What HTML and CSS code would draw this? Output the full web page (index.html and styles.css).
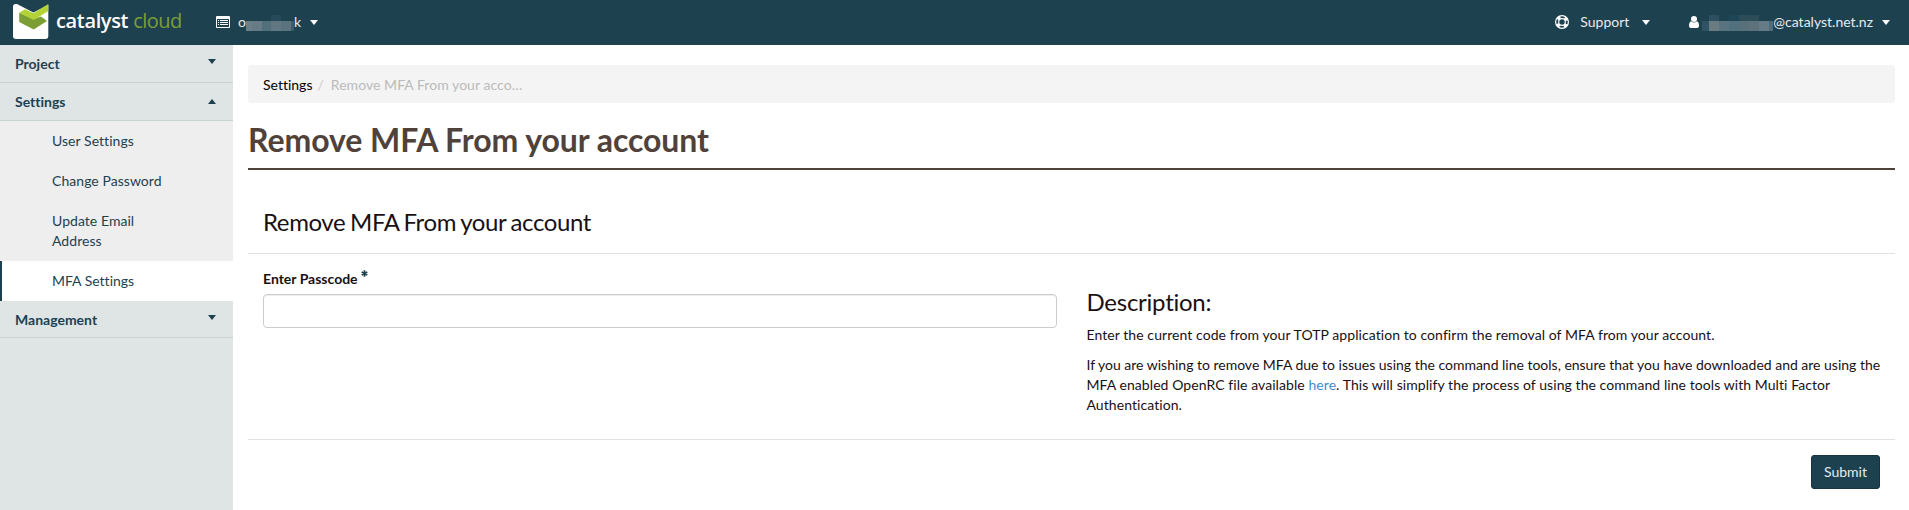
FILE: index.html
```
<!DOCTYPE html>
<html lang="en">
<head>
<meta charset="utf-8">
<title>Remove MFA From your account</title>
<link rel="stylesheet" href="styles.css">
</head>
<body>
<header class="topbar">
  <a class="brand">
    <svg class="brand-mark" width="36" height="36" viewBox="0 0 36 36">
      <path fill="#fff" d="M2.500 0H4L20.300 8.500L35.300 1V32a3 3 0 0 1-3 3H3a3 3 0 0 1-3-3V2.500A2.500 2.500 0 0 1 2.500 0z"/>
      <path fill="#7b9f35" d="M6.200 8.700L20.700 15L28 12.500L34 17L20.700 25.500L6.200 18z"/>
      <path fill="#b2d235" d="M6.200 8.700L12 5.300L20.300 9.300L35.300 0V7L20.700 16z"/>
    </svg>
    <span class="brand-name">catalyst</span><span class="brand-sub">cloud</span>
  </a>
  <div class="menu menu-project">
    <svg class="icon-list" width="14" height="12" viewBox="0 0 14 12">
      <path fill="#fff" fill-rule="evenodd" d="M1 0h12A1 1 0 0 1 14 1v10A1 1 0 0 1 13 12H1A1 1 0 0 1 0 11V1A1 1 0 0 1 1 0zM1 3V11h12V3zM2 4h1v1H2zM4 4h8v1H4zM2 6h1v1H2zM4 6h8v1H4zM2 8h1v1H2zM4 8h8v1H4z"/>
    </svg>
    <span class="menu-text">o</span><span class="mask mask-project"></span><span class="menu-text">k</span>
    <span class="caret"></span>
  </div>
  <div class="menu menu-support">
    <svg class="icon-ring" width="14" height="14" viewBox="0 0 14 14">
      <circle cx="7" cy="7" r="6.400" fill="none" stroke="#fff" stroke-width="1.200"/>
      <circle cx="7" cy="7" r="3.300" fill="none" stroke="#fff" stroke-width="1.200"/>
      <circle cx="7" cy="7" r="5" fill="none" stroke="#fff" stroke-width="3" stroke-dasharray="3.400 4.454" stroke-dashoffset="-2.227"/>
    </svg>
    <span class="menu-text">Support</span>
    <span class="caret"></span>
  </div>
  <div class="menu menu-user">
    <svg class="icon-user" width="10" height="12" viewBox="0 0 10 12">
      <circle cx="5" cy="3" r="3" fill="#fff"/>
      <path fill="#fff" d="M2.200 5.200Q5 8 7.800 5.200Q10 5.600 10 10Q10 12 8 12H2Q0 12 0 10Q0 5.600 2.200 5.200z"/>
    </svg>
    <span class="mask mask-user"></span><span class="menu-text">@catalyst.net.nz</span>
    <span class="caret"></span>
  </div>
</header>
<div class="page">
  <nav class="sidebar">
    <div class="group">Project<span class="caret"></span></div>
    <div class="group">Settings<span class="caret caret-up"></span></div>
    <ul class="links">
      <li class="link">User Settings</li>
      <li class="link">Change Password</li>
      <li class="link">Update Email Address</li>
      <li class="link link-active">MFA Settings</li>
    </ul>
    <div class="group group-last">Management<span class="caret"></span></div>
  </nav>
  <main class="main">
    <div class="breadcrumb"><span class="crumb">Settings</span><span class="slash">/</span><span class="crumb-current">Remove MFA From your acco…</span></div>
    <h1 class="title">Remove MFA From your account</h1>
    <h3 class="form-title">Remove MFA From your account</h3>
    <div class="form-body">
      <div class="field">
        <label class="label" for="passcode">Enter Passcode<svg class="required" width="7" height="7" viewBox="0 0 7 7"><path stroke="#1d4050" stroke-width="1.700" d="M3.500 .3V6.700M.7 1.900L6.300 5.100M6.300 1.900L.7 5.100"/></svg></label>
        <input class="input" id="passcode" type="text">
      </div>
      <div class="help">
        <h3 class="help-title">Description:</h3>
        <p class="text">Enter the current code from your TOTP application to confirm the removal of MFA from your account.</p>
        <p class="text"><span class="tight">If you are wishing to remove MFA due to issues using the command line tools, ensure that you have downloaded and are using the</span><br>MFA enabled OpenRC file available <a class="here">here</a>. This will simplify the process of using the command line tools with Multi Factor<br>Authentication.</p>
      </div>
    </div>
    <div class="form-footer"><button class="submit">Submit</button></div>
  </main>
</div>
</body>
</html>
```
FILE: styles.css
```
* { box-sizing: border-box; }
body { margin: 0; height: 510px; overflow: hidden; background: #fff; color: #1a1014; font: 14px/20px Lato, sans-serif; font-variant-ligatures: none; }
h1, h3, p, ul { margin: 0; padding: 0; font-weight: 400; }

.topbar { display: flex; align-items: center; height: 45px; padding-right: 19px; background: #1e4150; color: #e6eaec; }
.brand { display: flex; align-items: center; width: 216px; padding-left: 13px; height: 45px; font: 20px/24px "Open Sans", sans-serif; }
.brand-mark { margin: -1px 7px 0 0; }
.brand-name { margin-top: -3px; color: #fff; font-weight: 600; letter-spacing: -.35px; }
.brand-sub { margin: -3px 0 0 5px; color: #7b9f35; font-weight: 400; letter-spacing: -.5px; }
.menu { display: flex; align-items: center; margin-top: -2px; }
.menu-support { margin-left: auto; }
.menu-user { margin-left: 39px; }
.icon-list { margin-right: 8px; }
.icon-ring { margin: 1px 11px 0 0; }
.icon-user { margin-top: 1px; }
.caret { width: 0; height: 0; border: 4px solid transparent; border-top: 5px solid currentColor; border-bottom: 0; }
.menu .caret { color: #fff; margin-left: 13px; margin-top: 1px; }
.menu-project .caret { margin-left: 9px; }
.menu-user .caret { margin-left: 9px; }
.mask { height: 16px; margin-top: 2px; background-repeat: no-repeat; }
.mask-project {
  width: 48px;
  background-image: linear-gradient(#264a59, #264a59), linear-gradient(90deg, #6a7f88 0 6px, #667b85 6px 16px, #526f7c 16px 25px, #617782 25px 35px, #5b737e 35px 45px, #3d5c69 45px);
  background-size: 10px 6px, 100% 10px;
  background-position: 25px 0, 0 6px;
}
.mask-user {
  width: 71px;
  margin-left: 3px;
  background-image: linear-gradient(90deg, transparent 7px, #2c5060 7px 17px, transparent 17px 27px, #1e4558 27px 37px, #2c4d58 37px 57px, transparent 57px), linear-gradient(90deg, #2f5365 0 7px, #6b7b82 7px 17px, #597380 17px 27px, #52717e 27px 37px, #57707a 37px 47px, #5d727a 47px 57px, #657b86 57px 67px, #506c79 67px);
  background-size: 100% 6px, 100% 10px;
  background-position: 0 0, 0 6px;
}

.page { display: flex; height: 465px; }
.sidebar { flex: none; width: 233px; background: #dfe5e4; color: #1e4150; }
.group { display: flex; justify-content: space-between; height: 38px; padding: 9px 17px 0 15px; border-bottom: 1px solid #c8d2d5; font-weight: 700; }
.group-last { height: 37px; }
.group .caret { margin-top: 5px; }
.group .caret-up { margin-top: 7px; border: 4px solid transparent; border-bottom: 5px solid currentColor; border-top: 0; }
.links { list-style: none; background: #eee; }
.link { padding: 10px 70px 10px 52px; letter-spacing: .05px; }
.link-active { padding-left: 50px; border-left: 2px solid #1e4150; background: #fff; letter-spacing: 0; }

.main { flex: 1; min-width: 0; padding: 20px 14px 0 15px; }
.breadcrumb { height: 38px; padding: 10px 15px 8px; border-radius: 4px; background: #f4f4f4; }
.crumb { color: #000; }
.slash { padding: 0 7px 0 5px; color: #ccc; }
.crumb-current { color: #bbb; letter-spacing: .05px; }
.title { height: 67px; padding-top: 19px; border-bottom: 2px solid #50423a; color: #50423a; font: 700 32px/36px Lato, sans-serif; letter-spacing: -.07px; }
.form-title { height: 84px; padding: 38px 15px 0; border-bottom: 1px solid #e2e2e2; font-size: 24px; line-height: 27px; letter-spacing: -.4px; word-spacing: -1px; }
.form-body { display: grid; grid-template-columns: minmax(0, 1fr) minmax(0, 1fr); height: 185px; }
.field { padding: 15px 15px 0; }
.label { display: flex; height: 25px; font-weight: 700; }
.required { margin: 1px 0 0 3px; }
.input { display: block; width: 100%; height: 34px; border: 1px solid #ccc; border-radius: 4px; box-shadow: inset 0 1px 1px rgba(0,0,0,.075); }
.help { padding: 35px 15px 0; }
.help-title { margin-bottom: 10px; font-size: 24px; line-height: 26px; letter-spacing: -.25px; }
.text { margin-bottom: 10px; letter-spacing: .07px; white-space: nowrap; }
.tight { letter-spacing: -.01px; }
.here { color: #428bca; }
.form-footer { display: flex; justify-content: flex-end; padding: 15px 15px 0; border-top: 1px solid #e2e2e2; }
.submit { width: 69px; height: 34px; padding: 0; border: 1px solid #173340; border-radius: 3px; background: #1e4150; color: #e6eaec; font: 14px/20px Lato, sans-serif; }
```
